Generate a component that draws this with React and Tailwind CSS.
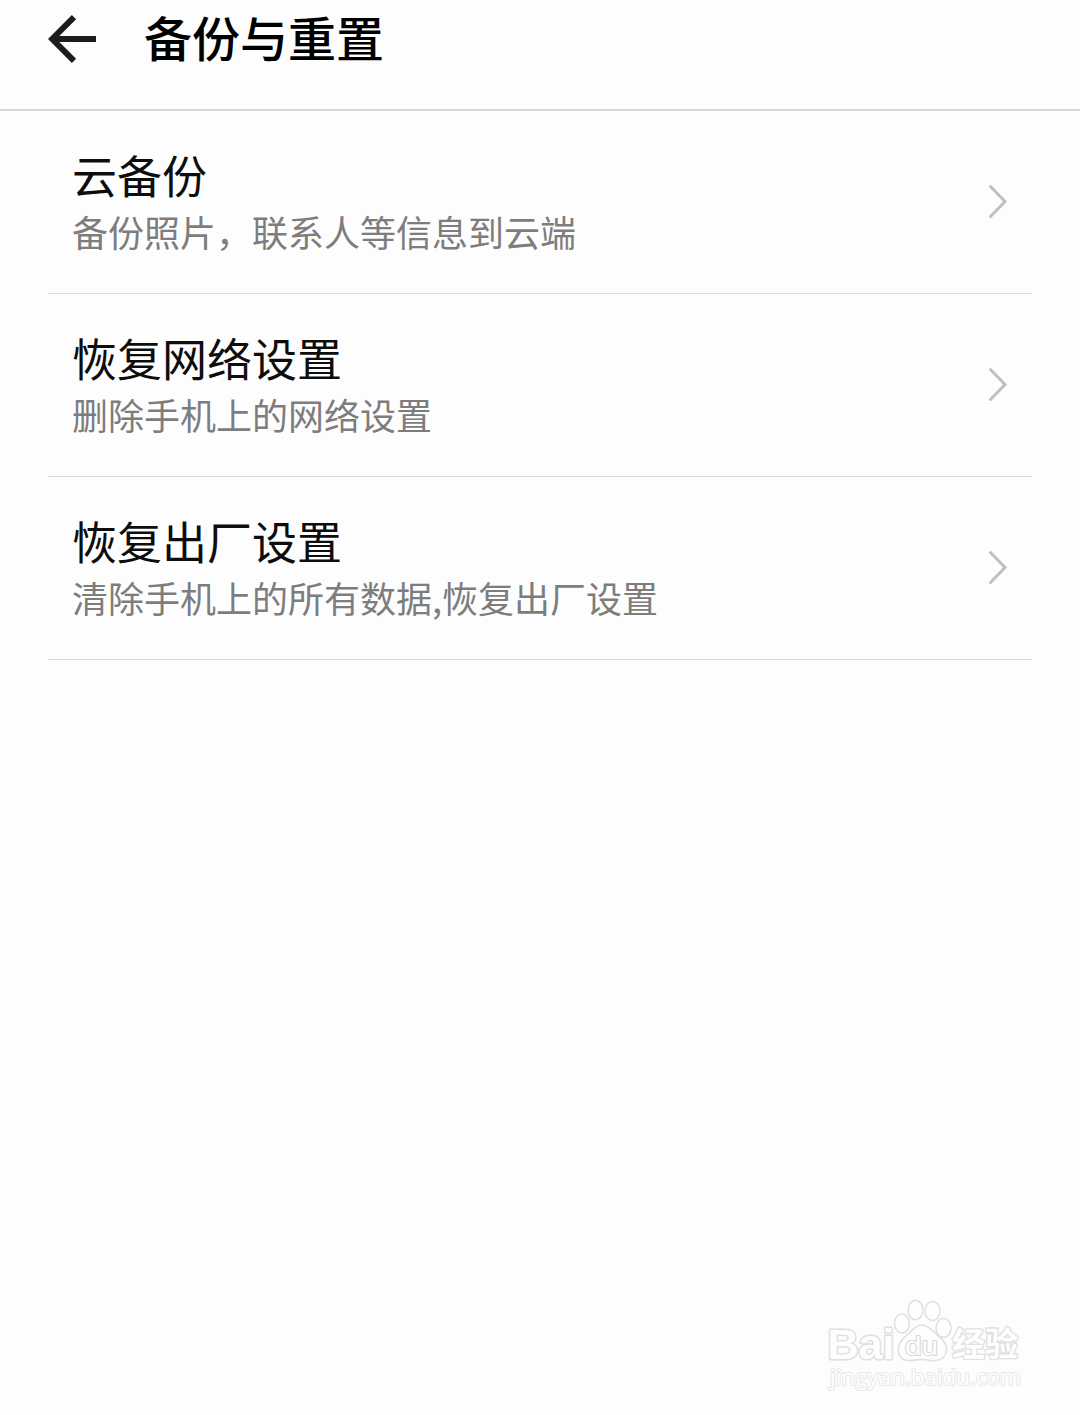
const items = [
  { title: "云备份", desc: "备份照片，联系人等信息到云端" },
  { title: "恢复网络设置", desc: "删除手机上的网络设置" },
  { title: "恢复出厂设置", desc: "清除手机上的所有数据,恢复出厂设置" },
];

const BackArrow = () => (
  <svg className="w-12 h-12 shrink-0" viewBox="0 0 48 48" fill="none" stroke="#1c1c1c" strokeWidth="6">
    <path d="M48 24H5" />
    <path d="M26 2.2L4.2 24L26 45.8" />
  </svg>
);

const Chevron = () => (
  <svg className="w-5 h-9 shrink-0" viewBox="0 0 20 36" fill="none" stroke="#bfbfbf" strokeWidth="3" strokeLinecap="round">
    <path d="M2.5 2.5L17 17.5L2.5 32.5" />
  </svg>
);

const SettingRow = ({ title, desc }) => {
  return (
    <li className="flex items-center justify-between h-[183px] px-6 border-b border-[#dcdcdc]">
      <div className="flex flex-col gap-px pb-px">
        <span className="text-[45px] leading-[58px] text-[#0d0d0d]">{title}</span>
        <span className="text-[36px] leading-[52px] text-[#7d7d7d]">{desc}</span>
      </div>
      <Chevron />
    </li>
  );
};

const Watermark = () => (
  <svg
    className="absolute left-[810px] top-[1285px] w-[230px] h-[120px]"
    viewBox="0 0 230 120"
    fill="#fefefe"
    stroke="#e0e0e0"
    strokeWidth="1.6"
    strokeLinejoin="round"
  >
    <ellipse cx="92" cy="38.5" rx="7.5" ry="9.5" />
    <ellipse cx="105.5" cy="25" rx="7.3" ry="9.8" />
    <ellipse cx="122.5" cy="26" rx="7.5" ry="9.5" />
    <ellipse cx="133.5" cy="43" rx="7.5" ry="9.5" />
    <path d="M112 40C105 40 102 46 97 50C91 55 88 59 88.5 66C89 73 94 76 100 75.5C105 75 108 74.5 112 74.5C117 74.5 120 76 126 75.5C132 75 136 71 136.5 65C137 59 133 55 127 50C122 46 119 40 112 40Z" />
    <g style={{ paintOrder: "stroke" }}>
      <text className="font-['Liberation_Sans',sans-serif] font-bold" x="17.5" y="73.5" fontSize="43" strokeWidth="3" textLength="67" lengthAdjust="spacingAndGlyphs">Bai</text>
      <text className="font-['Liberation_Sans',sans-serif]" x="95" y="69.5" fontSize="25" stroke="#d8d8d8" strokeWidth="2" textLength="33" lengthAdjust="spacingAndGlyphs">du</text>
      <text className="font-['Noto_Sans_CJK_SC',sans-serif] font-bold" x="142" y="71" fontSize="33" strokeWidth="2.6">经验</text>
      <text className="font-['Open_Sans',sans-serif]" x="20" y="100" fontSize="22" stroke="#e8e8e8" strokeWidth="2" textLength="191" lengthAdjust="spacingAndGlyphs">jingyan.baidu.com</text>
    </g>
  </svg>
);

export default function App() {
  return (
    <div className="relative w-[1080px] h-[1415px] overflow-hidden bg-[#fdfdfd] font-['Noto_Sans_CJK_SC',sans-serif]">
      <header className="flex items-start gap-12 h-[111px] pl-12 border-b-2 border-[#d6d6d6]">
        <div className="pt-[15px]">
          <BackArrow />
        </div>
        <h1 className="text-[48px] leading-[72px] font-medium text-black">备份与重置</h1>
      </header>

      <ul className="px-12">
        {items.map((item) => (
          <SettingRow key={item.title} title={item.title} desc={item.desc} />
        ))}
      </ul>

      <Watermark />
    </div>
  );
}
